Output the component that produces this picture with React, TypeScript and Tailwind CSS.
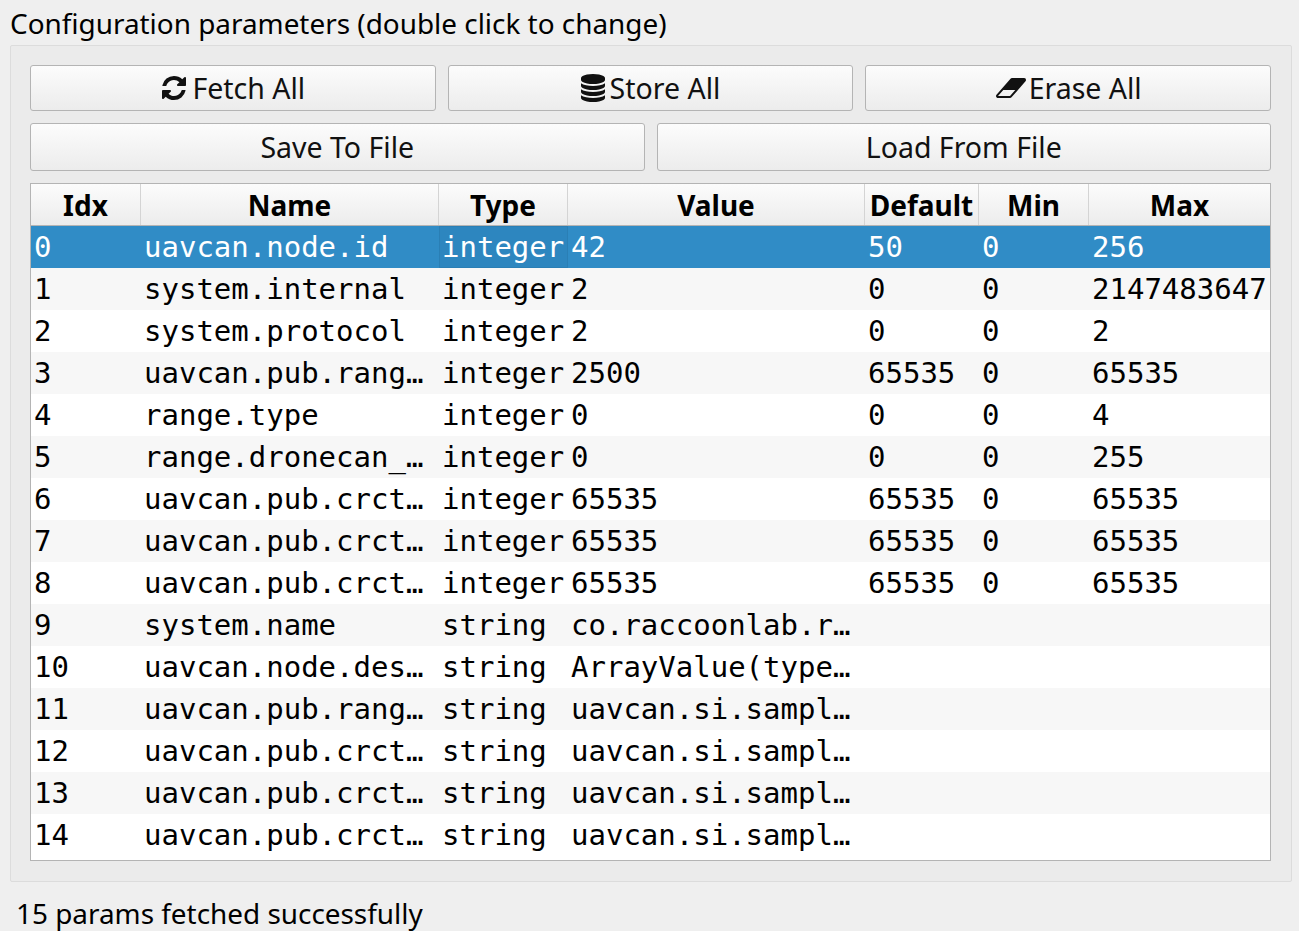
import type { ReactNode } from 'react';

const uiFont = "font-['Noto_Sans',sans-serif]";

const columns = [
    { title: 'Idx', width: 'w-[110px]' },
    { title: 'Name', width: 'w-[298px]' },
    { title: 'Type', width: 'w-[129px]' },
    { title: 'Value', width: 'w-[297px]' },
    { title: 'Default', width: 'w-[114px]' },
    { title: 'Min', width: 'w-[110px]' },
    { title: 'Max', width: 'w-[181px]' },
];

const rows = [
    ['0', 'uavcan.node.id', 'integer', '42', '50', '0', '256'],
    ['1', 'system.internal', 'integer', '2', '0', '0', '2147483647'],
    ['2', 'system.protocol', 'integer', '2', '0', '0', '2'],
    ['3', 'uavcan.pub.rang…', 'integer', '2500', '65535', '0', '65535'],
    ['4', 'range.type', 'integer', '0', '0', '0', '4'],
    ['5', 'range.dronecan_…', 'integer', '0', '0', '0', '255'],
    ['6', 'uavcan.pub.crct…', 'integer', '65535', '65535', '0', '65535'],
    ['7', 'uavcan.pub.crct…', 'integer', '65535', '65535', '0', '65535'],
    ['8', 'uavcan.pub.crct…', 'integer', '65535', '65535', '0', '65535'],
    ['9', 'system.name', 'string', 'co.raccoonlab.r…', '', '', ''],
    ['10', 'uavcan.node.des…', 'string', 'ArrayValue(type…', '', '', ''],
    ['11', 'uavcan.pub.rang…', 'string', 'uavcan.si.sampl…', '', '', ''],
    ['12', 'uavcan.pub.crct…', 'string', 'uavcan.si.sampl…', '', '', ''],
    ['13', 'uavcan.pub.crct…', 'string', 'uavcan.si.sampl…', '', '', ''],
    ['14', 'uavcan.pub.crct…', 'string', 'uavcan.si.sampl…', '', '', ''],
];

function RefreshIcon() {
    return (
        <svg viewBox="0 0 1792 1792" className="h-[28px] w-[28px]" fill="currentColor">
            <path d="M1639 1056q0 5-1 7-64 268-268 434.5t-478 166.5q-146 0-282.5-55t-243.5-157l-129 129q-19 19-45 19t-45-19-19-45v-448q0-26 19-45t45-19h448q26 0 45 19t19 45-19 45l-137 137q71 66 161 102t187 36q134 0 250-65t186-179q11-17 53-117 8-23 30-23h192q13 0 22.5 9.5t9.5 22.5zm25-800v448q0 26-19 45t-45 19h-448q-26 0-45-19t-19-45 19-45l138-138q-148-137-349-137-134 0-250 65t-186 179q-11 17-53 117-8 23-30 23h-199q-13 0-22.5-9.5t-9.5-22.5v-7q65-268 270-434.5t480-166.5q146 0 284 55.5t245 156.5l130-129q19-19 45-19t45 19 19 45z" />
        </svg>
    );
}

function DatabaseIcon() {
    return (
        <svg viewBox="0 0 1536 1792" className="mr-[1px] h-[28px] w-[24px]" fill="currentColor">
            <path d="M768 768q237 0 443-43t325-127v170q0 69-103 128t-280 93.5-385 34.5-385-34.5-280-93.5-103-128v-170q119 84 325 127t443 43zm0 768q237 0 443-43t325-127v170q0 69-103 128t-280 93.5-385 34.5-385-34.5-280-93.5-103-128v-170q119 84 325 127t443 43zm0-384q237 0 443-43t325-127v170q0 69-103 128t-280 93.5-385 34.5-385-34.5-280-93.5-103-128v-170q119 84 325 127t443 43zm0-1152q208 0 385 34.5t280 93.5 103 128v128q0 69-103 128t-280 93.5-385 34.5-385-34.5-280-93.5-103-128v-128q0-69 103-128t280-93.5 385-34.5z" />
        </svg>
    );
}

function EraserIcon() {
    return (
        <svg viewBox="0 0 1984 1792" className="mr-[-1px] h-[28px] w-[31px]" fill="currentColor">
            <path d="M960 1408l336-384h-768l-336 384h768zm1013-1077q15 34 9.5 71.5t-30.5 65.5l-896 1024q-38 44-96 44h-768q-38 0-69.5-20.5t-47.5-54.5q-15-34-9.5-71.5t30.5-65.5l896-1024q38-44 96-44h768q38 0 70 20.5t47 54.5z" />
        </svg>
    );
}

function QtButton({ className, children }: { className: string; children: ReactNode }) {
    return (
        <button className={`flex flex-1 items-center justify-center gap-[4px] rounded-[3px] border border-[#b4b4b4] bg-gradient-to-b from-[#fcfcfc] to-[#ececec] text-[28.5px] text-[#111] ${className}`}>
            {children}
        </button>
    );
}

export default function App() {
    return (
        <div className={`flex h-[931px] w-[1299px] flex-col overflow-hidden bg-[#efefef] text-black ${uiFont}`}>
            <div className="flex h-[45px] shrink-0 items-center pl-[10px] pt-[2px] text-[27.9px] leading-none">
                Configuration parameters (double click to change)
            </div>

            <div className="ml-[10px] flex h-[837px] w-[1282px] shrink-0 flex-col gap-[12px] rounded-[2px] border border-[#dcdcdc] bg-[#ebebeb] pl-[19px] pr-[20px] pt-[19px]">
                <div className="flex gap-[12px]">
                    <QtButton className="h-[46px]">
                        <RefreshIcon />
                        Fetch All
                    </QtButton>
                    <QtButton className="h-[46px]">
                        <DatabaseIcon />
                        Store All
                    </QtButton>
                    <QtButton className="h-[46px]">
                        <EraserIcon />
                        Erase All
                    </QtButton>
                </div>
                <div className="flex gap-[12px]">
                    <QtButton className="h-[48px]">Save To File</QtButton>
                    <QtButton className="h-[48px]">Load From File</QtButton>
                </div>

                <div className="h-[678px] w-[1241px] shrink-0 border border-[#b4b4b4] bg-white">
                    <div className="flex h-[42px] border-b border-[#b4b4b4] bg-gradient-to-b from-[#fcfcfc] to-[#ececec]">
                        {columns.map((col, i) => (
                            <div
                                key={col.title}
                                className={`${col.width} flex shrink-0 items-center justify-center text-[28px] font-bold ${i < columns.length - 1 ? 'border-r border-[#d4d4d4]' : ''}`}
                            >
                                {col.title}
                            </div>
                        ))}
                    </div>
                    {rows.map((row, r) => (
                        <div
                            key={r}
                            className={`flex h-[42px] font-['DejaVu_Sans_Mono',monospace] text-[29px] ${r === 0 ? 'bg-[#308cc6] text-white' : r % 2 === 1 ? 'bg-[#f7f7f7]' : 'bg-white'}`}
                        >
                            {row.map((cell, c) => (
                                <div
                                    key={c}
                                    className={`${columns[c].width} flex shrink-0 items-center overflow-hidden whitespace-pre pl-[3px] pt-[2px] ${r === 0 && c === 2 ? 'bg-[#2d86bf] outline outline-1 -outline-offset-1 outline-[#2a7fb5]' : ''}`}
                                >
                                    {cell}
                                </div>
                            ))}
                        </div>
                    ))}
                </div>
            </div>

            <div className="flex h-[49px] shrink-0 items-center pl-[16px] pt-[13px] text-[27.9px] leading-[36px]">
                15 params fetched successfully
            </div>
        </div>
    );
}
